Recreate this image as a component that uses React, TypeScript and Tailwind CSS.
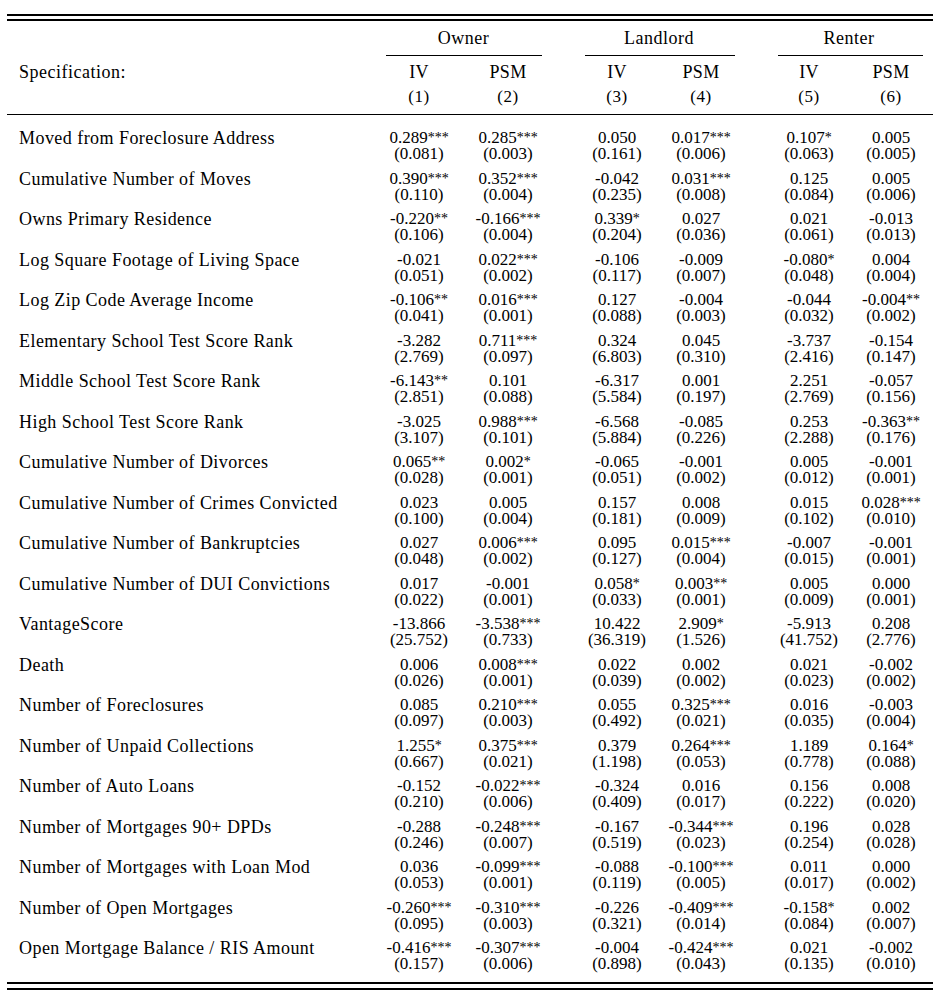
import React from 'react'

type Row = { label: string; cells: [string, string][] }

const rows: Row[] = [
  { label: 'Moved from Foreclosure Address', cells: [['0.289***', '(0.081)'], ['0.285***', '(0.003)'], ['0.050', '(0.161)'], ['0.017***', '(0.006)'], ['0.107*', '(0.063)'], ['0.005', '(0.005)']] },
  { label: 'Cumulative Number of Moves', cells: [['0.390***', '(0.110)'], ['0.352***', '(0.004)'], ['-0.042', '(0.235)'], ['0.031***', '(0.008)'], ['0.125', '(0.084)'], ['0.005', '(0.006)']] },
  { label: 'Owns Primary Residence', cells: [['-0.220**', '(0.106)'], ['-0.166***', '(0.004)'], ['0.339*', '(0.204)'], ['0.027', '(0.036)'], ['0.021', '(0.061)'], ['-0.013', '(0.013)']] },
  { label: 'Log Square Footage of Living Space', cells: [['-0.021', '(0.051)'], ['0.022***', '(0.002)'], ['-0.106', '(0.117)'], ['-0.009', '(0.007)'], ['-0.080*', '(0.048)'], ['0.004', '(0.004)']] },
  { label: 'Log Zip Code Average Income', cells: [['-0.106**', '(0.041)'], ['0.016***', '(0.001)'], ['0.127', '(0.088)'], ['-0.004', '(0.003)'], ['-0.044', '(0.032)'], ['-0.004**', '(0.002)']] },
  { label: 'Elementary School Test Score Rank', cells: [['-3.282', '(2.769)'], ['0.711***', '(0.097)'], ['0.324', '(6.803)'], ['0.045', '(0.310)'], ['-3.737', '(2.416)'], ['-0.154', '(0.147)']] },
  { label: 'Middle School Test Score Rank', cells: [['-6.143**', '(2.851)'], ['0.101', '(0.088)'], ['-6.317', '(5.584)'], ['0.001', '(0.197)'], ['2.251', '(2.769)'], ['-0.057', '(0.156)']] },
  { label: 'High School Test Score Rank', cells: [['-3.025', '(3.107)'], ['0.988***', '(0.101)'], ['-6.568', '(5.884)'], ['-0.085', '(0.226)'], ['0.253', '(2.288)'], ['-0.363**', '(0.176)']] },
  { label: 'Cumulative Number of Divorces', cells: [['0.065**', '(0.028)'], ['0.002*', '(0.001)'], ['-0.065', '(0.051)'], ['-0.001', '(0.002)'], ['0.005', '(0.012)'], ['-0.001', '(0.001)']] },
  { label: 'Cumulative Number of Crimes Convicted', cells: [['0.023', '(0.100)'], ['0.005', '(0.004)'], ['0.157', '(0.181)'], ['0.008', '(0.009)'], ['0.015', '(0.102)'], ['0.028***', '(0.010)']] },
  { label: 'Cumulative Number of Bankruptcies', cells: [['0.027', '(0.048)'], ['0.006***', '(0.002)'], ['0.095', '(0.127)'], ['0.015***', '(0.004)'], ['-0.007', '(0.015)'], ['-0.001', '(0.001)']] },
  { label: 'Cumulative Number of DUI Convictions', cells: [['0.017', '(0.022)'], ['-0.001', '(0.001)'], ['0.058*', '(0.033)'], ['0.003**', '(0.001)'], ['0.005', '(0.009)'], ['0.000', '(0.001)']] },
  { label: 'VantageScore', cells: [['-13.866', '(25.752)'], ['-3.538***', '(0.733)'], ['10.422', '(36.319)'], ['2.909*', '(1.526)'], ['-5.913', '(41.752)'], ['0.208', '(2.776)']] },
  { label: 'Death', cells: [['0.006', '(0.026)'], ['0.008***', '(0.001)'], ['0.022', '(0.039)'], ['0.002', '(0.002)'], ['0.021', '(0.023)'], ['-0.002', '(0.002)']] },
  { label: 'Number of Foreclosures', cells: [['0.085', '(0.097)'], ['0.210***', '(0.003)'], ['0.055', '(0.492)'], ['0.325***', '(0.021)'], ['0.016', '(0.035)'], ['-0.003', '(0.004)']] },
  { label: 'Number of Unpaid Collections', cells: [['1.255*', '(0.667)'], ['0.375***', '(0.021)'], ['0.379', '(1.198)'], ['0.264***', '(0.053)'], ['1.189', '(0.778)'], ['0.164*', '(0.088)']] },
  { label: 'Number of Auto Loans', cells: [['-0.152', '(0.210)'], ['-0.022***', '(0.006)'], ['-0.324', '(0.409)'], ['0.016', '(0.017)'], ['0.156', '(0.222)'], ['0.008', '(0.020)']] },
  { label: 'Number of Mortgages 90+ DPDs', cells: [['-0.288', '(0.246)'], ['-0.248***', '(0.007)'], ['-0.167', '(0.519)'], ['-0.344***', '(0.023)'], ['0.196', '(0.254)'], ['0.028', '(0.028)']] },
  { label: 'Number of Mortgages with Loan Mod', cells: [['0.036', '(0.053)'], ['-0.099***', '(0.001)'], ['-0.088', '(0.119)'], ['-0.100***', '(0.005)'], ['0.011', '(0.017)'], ['0.000', '(0.002)']] },
  { label: 'Number of Open Mortgages', cells: [['-0.260***', '(0.095)'], ['-0.310***', '(0.003)'], ['-0.226', '(0.321)'], ['-0.409***', '(0.014)'], ['-0.158*', '(0.084)'], ['0.002', '(0.007)']] },
  { label: 'Open Mortgage Balance / RIS Amount', cells: [['-0.416***', '(0.157)'], ['-0.307***', '(0.006)'], ['-0.004', '(0.898)'], ['-0.424***', '(0.043)'], ['0.021', '(0.135)'], ['-0.002', '(0.010)']] },
]

// column widths + spacing between the three groups
const colClass = [
  'w-[84px]',
  'w-[84px] ml-[5px]',
  'w-[84px] ml-[25px]',
  'w-[84px]',
  'w-[84px] ml-[24px]',
  'w-[80px]',
]

function Value({ v }: { v: string }) {
  const m = v.match(/^(.*?)(\**)$/)
  const num = m ? m[1] : v
  const stars = m ? m[2] : ''
  return (
    <div className="h-[16px] leading-[16px] whitespace-nowrap">
      {num}
      {stars && <span className="relative -top-[1px] text-[14px]">{stars}</span>}
    </div>
  )
}

function DataRow({ row }: { row: Row }) {
  return (
    <div className="flex h-[40.5px]">
      <div className="w-[370px] pl-[12px] text-[18px] tracking-[0.45px] leading-[16px] whitespace-nowrap">{row.label}</div>
      {row.cells.map((c, i) => (
        <div key={i} className={`${colClass[i]} text-center text-[17px]`}>
          <Value v={c[0]} />
          <div className="h-[16px] leading-[16px]">{c[1]}</div>
        </div>
      ))}
    </div>
  )
}

export default function App() {
  return (
    <div className="bg-white text-black w-[947px] h-[1002px] font-['Liberation_Serif',serif]">
      <div className="ml-[7px] w-[926px] pt-[14px]">
        <div className="h-[2px] bg-black" />
        <div className="h-[2px] bg-black mt-[3px]" />

        {/* group header */}
        <div className="flex mt-[5px] text-[18px] tracking-[0.5px]">
          <div className="w-[370px]" />
          <div className="w-[173px]">
            <div className="text-center leading-[24px]">Owner</div>
            <div className="h-[1px] bg-black mt-[5px] ml-[9px] mr-[8px]" />
          </div>
          <div className="w-[168px] ml-[25px]">
            <div className="text-center leading-[24px]">Landlord</div>
            <div className="h-[1px] bg-black mt-[5px] ml-[10px] mr-[8px]" />
          </div>
          <div className="w-[164px] ml-[24px]">
            <div className="text-center leading-[24px]">Renter</div>
            <div className="h-[1px] bg-black mt-[5px] ml-[11px] mr-[8px]" />
          </div>
        </div>

        <div className="flex mt-[6px] text-[18px] tracking-[0.3px] leading-[20px]">
          <div className="w-[370px] pl-[12px] tracking-[0.5px]">Specification:</div>
          {['IV', 'PSM', 'IV', 'PSM', 'IV', 'PSM'].map((s, i) => (
            <div key={i} className={`${colClass[i]} text-center`}>{s}</div>
          ))}
        </div>
        <div className="flex mt-[5px] text-[17px] tracking-[0.5px] leading-[20px]">
          <div className="w-[370px]" />
          {['(1)', '(2)', '(3)', '(4)', '(5)', '(6)'].map((s, i) => (
            <div key={i} className={`${colClass[i]} text-center`}>{s}</div>
          ))}
        </div>
        <div className="h-[1px] bg-black mt-[7px]" />

        <div className="mt-[15px]">
          {rows.map((r) => (
            <DataRow key={r.label} row={r} />
          ))}
        </div>

        <div className="h-[2px] bg-black mt-[1px]" />
        <div className="h-[2px] bg-black mt-[4px]" />
      </div>
    </div>
  )
}
